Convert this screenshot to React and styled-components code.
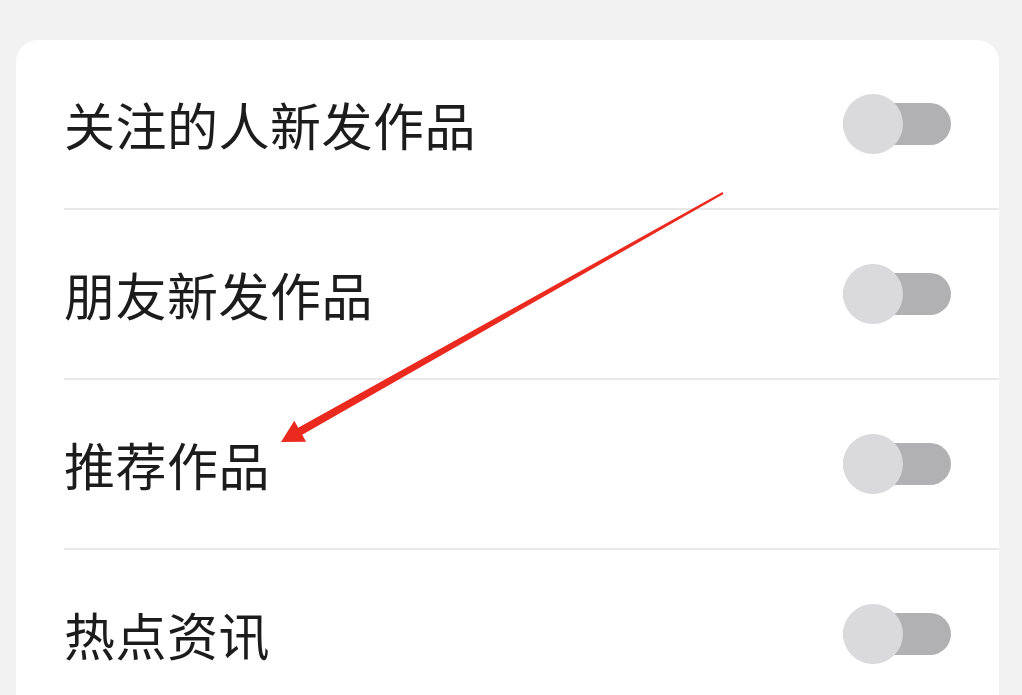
import styled, { createGlobalStyle } from "styled-components";

const GlobalStyle = createGlobalStyle`
  html, body {
    margin: 0;
    padding: 0;
    background: #f2f2f2;
    font-family: "Noto Sans CJK SC", "Noto Sans", sans-serif;
  }
`;

const Page = styled.div`
  position: relative;
  width: 1022px;
  height: 695px;
  overflow: hidden;
  padding: 40px 23px 0 16px;
  box-sizing: border-box;
`;

const Card = styled.div`
  background: #ffffff;
  border-radius: 22px 22px 0 0;
  height: 100%;
`;

const Row = styled.div`
  display: flex;
  align-items: center;
  justify-content: space-between;
  height: 168px;
  margin-left: 48px;
  padding-right: 48px;
  border-bottom: ${(p) => (p.$last ? "none" : "2px solid #e8e8e8")};
`;

const Label = styled.span`
  font-size: 51px;
  color: #1c1c1c;
  letter-spacing: 0.5px;
  line-height: 1;
`;

const Toggle = styled.div`
  position: relative;
  width: 108px;
  height: 60px;
  display: flex;
  align-items: center;
`;

const Track = styled.div`
  width: 100%;
  height: 42px;
  border-radius: 21px;
  background: #b1b1b3;
`;

const Knob = styled.div`
  position: absolute;
  left: 0;
  top: 0;
  width: 60px;
  height: 60px;
  border-radius: 50%;
  background: #dadadc;
`;

const Annotation = styled.svg`
  position: absolute;
  left: 0;
  top: 0;
  pointer-events: none;
`;

const items = ["关注的人新发作品", "朋友新发作品", "推荐作品", "热点资讯"];

export default function App() {
  return (
    <>
      <GlobalStyle />
      <Page>
        <Card>
          {items.map((text, i) => (
            <Row key={text} $last={i === items.length - 1}>
              <Label>{text}</Label>
              <Toggle>
                <Track />
                <Knob />
              </Toggle>
            </Row>
          ))}
        </Card>
        <Annotation width="1022" height="695" viewBox="0 0 1022 695">
          <polygon
            fill="#ea2a1f"
            points="722.5,192.1 723.5,193.9 302.2,434.7 306.1,441.7 281,442 294.3,420.7 298.2,427.7"
          />
        </Annotation>
      </Page>
    </>
  );
}
